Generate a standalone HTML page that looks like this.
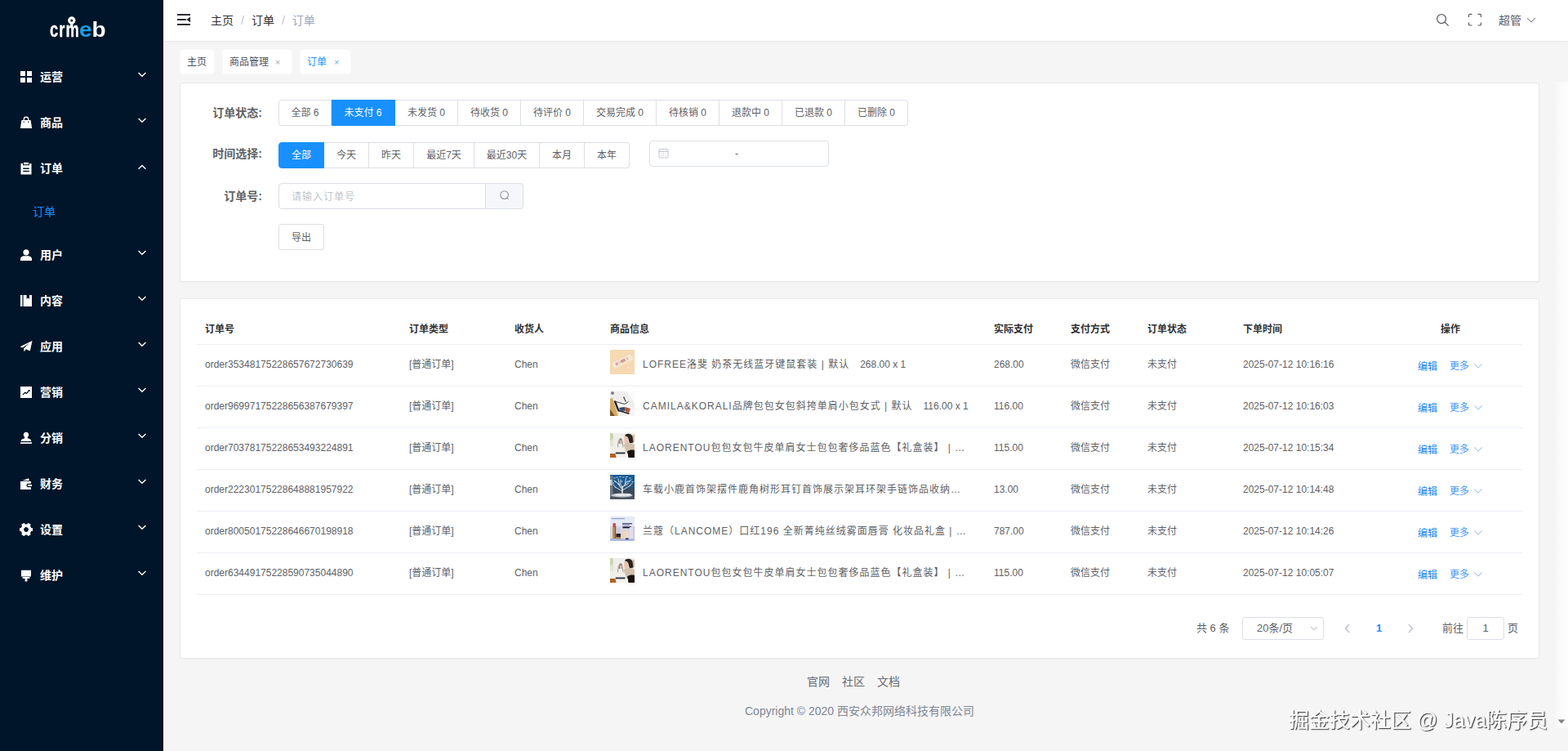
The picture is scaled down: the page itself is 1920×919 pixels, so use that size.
<!DOCTYPE html>
<html lang="zh-CN">
<head>
<meta charset="utf-8">
<title>订单</title>
<style>
*{box-sizing:border-box;margin:0;padding:0}
html,body{width:1920px;height:919px;overflow:hidden}
body{position:relative;background:#f5f5f5;font-family:"Liberation Sans","Noto Sans CJK SC",sans-serif;font-size:14px;color:#606266;-webkit-font-smoothing:antialiased}
.abs{position:absolute}
/* ---------- sidebar ---------- */
#side{position:absolute;left:0;top:0;width:200px;height:919px;background:#001529}
#logo{position:absolute;left:0;top:0;width:200px;height:66px;color:#fff;font-weight:700;font-size:25px;line-height:30px;white-space:nowrap}
#logo span{position:absolute;top:21px;display:block;transform-origin:0 0}
#logo i{font-style:normal;color:#1b9be0}
.mi{position:absolute;left:0;width:200px;height:56px;color:#fff;font-weight:700;font-size:14px;line-height:56px}
.mi span{position:absolute;left:49px;top:0;white-space:nowrap}
.mi svg.ic{position:absolute;left:24px;top:20px;width:16px;height:16px;fill:#fff}
.mi svg.ar{position:absolute;left:168px;top:19.400px;width:12px;height:12px;fill:none;stroke:#fff;stroke-width:1.4}
#sub{position:absolute;left:40px;top:234px;height:50px;line-height:50px;color:#1890ff;font-size:14px}
/* ---------- header ---------- */
#head{position:absolute;left:200px;top:0;width:1720px;height:50px;background:#fff;box-shadow:0 1px 3px rgba(0,21,41,.06)}
#bc{position:absolute;left:58px;top:0;height:50px;line-height:50px;font-size:14px;color:#303133;white-space:nowrap}
#bc b{font-weight:400;color:#c0c4cc;margin:0 9px}
#bc em{font-style:normal;color:#97a8be}
#user{position:absolute;left:1635px;top:0;line-height:50px;font-size:14px;color:#585c66}
/* ---------- tags ---------- */
.tag{position:absolute;top:61px;height:29px;line-height:30px;background:#fff;border-radius:3px;box-shadow:0 0 0 1px rgba(255,255,255,.5);font-size:12px;color:#495060;padding-left:8px;white-space:nowrap}
.tag u{text-decoration:none;position:absolute;right:14px;top:0.500px;font-size:10px;color:#a0a4ad}
/* ---------- cards ---------- */
.card{position:absolute;left:220px;width:1665px;background:#fff;border:1px solid #e8e9ec;border-radius:3px;box-shadow:0 1px 2px rgba(0,0,0,.03)}
.lbl{position:absolute;width:100px;text-align:right;font-weight:700;font-size:14px;color:#606266;line-height:32px;left:0}
.rg{position:absolute;left:120px;height:32px;display:flex;font-size:12px;color:#606266}
.rg a{display:block;height:32px;line-height:30px;border:1px solid #dcdfe6;border-left:0;text-align:center;white-space:nowrap;background:#fff}
.rg a:first-child{border-left:1px solid #dcdfe6;border-radius:4px 0 0 4px}
.rg a:last-child{border-radius:0 4px 4px 0}
.rg a.on{background:#1890ff;border-color:#1890ff;color:#fff}
/* ---------- table ---------- */
#tb{position:absolute;left:20px;top:1px;width:1623px;font-size:12px;color:#606266}
.th{position:absolute;top:29px;font-weight:700;color:#303133;line-height:14px;white-space:nowrap}
.hr{position:absolute;left:0;width:1623px;height:1px;background:#ebeef5}
.row{position:absolute;left:0;width:1623px;height:51px}
.row span{position:absolute;top:17px;line-height:14px;white-space:nowrap}
.row .pi{letter-spacing:1px;max-width:400px;overflow:hidden;text-overflow:ellipsis}
.row .pi em{font-style:normal;letter-spacing:0}
.row svg.tm{position:absolute;left:506px;top:6px;width:30px;height:30px;filter:blur(.3px)}
.row .ed{color:#1585f2;top:20px;margin-left:-1px}
.row .mo{color:#4596f7;top:19px}
.row svg.cv{position:absolute;left:1564px;top:21.600px;width:10px;height:8px;fill:none;stroke:#86aef5;stroke-width:.9}
/* ---------- pagination ---------- */
.pg{position:absolute;font-size:13px;color:#606266;white-space:nowrap;line-height:28px;top:389px}
.box{position:absolute;top:389px;height:28px;border:1px solid #dcdfe6;border-radius:3px;background:#fff;font-size:13px;line-height:26px;color:#606266;text-align:center}
/* ---------- footer ---------- */
.ft{position:absolute;white-space:nowrap;color:#808695;font-size:14px}
#wm{position:absolute;left:1578px;top:862.7px;will-change:transform;opacity:.99;font-size:25px;line-height:36px;color:#fafafa;white-space:nowrap;text-shadow:-.5px -.5px 0 #fff,1px 1px 1px #3a3a3a,1px 1px 2px rgba(0,0,0,.3)}
</style>
</head>
<body>
<!-- SIDEBAR -->
<div id="side">
  <div id="logo"><svg class="abs" style="left:80px;top:18px;width:16px;height:16px" viewBox="0 0 16 16"><circle cx="7.800" cy="7" r="3.100" fill="none" stroke="#fff" stroke-width="3.200"/><rect x="6.200" y="10" width="3.200" height="4" fill="#fff"/></svg><span style="left:61px;transform:scaleX(.73);-webkit-text-stroke:.35px #fff;letter-spacing:1.6px">crm</span><span style="left:97px;transform:scaleX(1.12)"><i>e</i>b</span></div>
  <div class="mi" style="top:66px"><svg class="ic" viewBox="0 0 16 16"><path d="M1 1h6v6H1zM9 1h6v6H9zM1 9h6v6H1zM9 9h6v6H9z"/></svg><span>运营</span><svg class="ar" viewBox="0 0 12 12"><path d="M1.6 4 L6 8.3 L10.4 4"/></svg></div>
  <div class="mi" style="top:122px"><svg class="ic" viewBox="0 0 16 16"><path d="M4.6 5V4.000a3.4 3.4 0 0 1 6.800 0v1h2.200l1.500 10H0.900L2.400 5zM5.900 5h4.200V4.000a2.100 2.100 0 0 0-4.200 0z" fill-rule="evenodd"/><circle cx="5.300" cy="7.300" r=".8" fill="#001529"/><circle cx="10.700" cy="7.300" r=".8" fill="#001529"/></svg><span>商品</span><svg class="ar" viewBox="0 0 12 12"><path d="M1.6 4 L6 8.3 L10.4 4"/></svg></div>
  <div class="mi" style="top:178px"><svg class="ic" viewBox="0 0 16 16"><path d="M5 0.800h6v2.400H5z"/><path d="M1.500 2h2.500v2.200h8V2h2.500v13.500h-13zM4.200 7.400h7.600v1.500H4.200zM4.200 10.800h7.600v1.500H4.200z" fill-rule="evenodd"/></svg><span>订单</span><svg class="ar" viewBox="0 0 12 12"><path d="M1.6 9.7 L6 5.4 L10.4 9.7"/></svg></div>
  <div class="mi" style="top:284px"><svg class="ic" viewBox="0 0 16 16"><circle cx="8" cy="4.8" r="3.6"/><path d="M1 15v-2.2c0-2 2.4-3.6 4.6-3.6h4.8c2.2 0 4.6 1.6 4.6 3.6V15z"/></svg><span>用户</span><svg class="ar" viewBox="0 0 12 12"><path d="M1.6 4 L6 8.3 L10.4 4"/></svg></div>
  <div class="mi" style="top:340px"><svg class="ic" viewBox="0 0 16 16"><path d="M1 1h2.4v14H1zM4.6 1h4v5l1.7-1.5L12 6V1h3v14H4.6z"/></svg><span>内容</span><svg class="ar" viewBox="0 0 12 12"><path d="M1.6 4 L6 8.3 L10.4 4"/></svg></div>
  <div class="mi" style="top:396px"><svg class="ic" viewBox="0 0 16 16"><path d="M0.5 8.2 15.5 1 12.8 13.6 7.6 11.2 5.6 14.6 5 10.4 12.2 3.8 3.6 9.6z"/></svg><span>应用</span><svg class="ar" viewBox="0 0 12 12"><path d="M1.6 4 L6 8.3 L10.4 4"/></svg></div>
  <div class="mi" style="top:452px"><svg class="ic" viewBox="0 0 16 16"><path d="M1 1h14v14H1zM3.4 10.8l0.8 0.8 2.6-2.4 1.8 1 3.2-3.4 0.6 0.7 0.4-2.6-2.6 0.3 0.7 0.7-2.5 2.6-1.8-1z" fill-rule="evenodd"/></svg><span>营销</span><svg class="ar" viewBox="0 0 12 12"><path d="M1.6 4 L6 8.3 L10.4 4"/></svg></div>
  <div class="mi" style="top:508px"><svg class="ic" viewBox="0 0 16 16"><path d="M8 0.8a3.3 3.3 0 0 1 2 5.9c-0.5 0.6-0.3 1.6 0.4 1.9l2.6 0.8c0.8 0.3 1.2 0.9 1.2 1.6v1H1.8v-1c0-0.7 0.4-1.3 1.2-1.6l2.6-0.8c0.7-0.3 0.9-1.3 0.4-1.9A3.3 3.3 0 0 1 8 0.8zM1 13.2h14V15H1z"/></svg><span>分销</span><svg class="ar" viewBox="0 0 12 12"><path d="M1.6 4 L6 8.3 L10.4 4"/></svg></div>
  <div class="mi" style="top:564px"><svg class="ic" viewBox="0 0 16 16"><path d="M3.2 4.2 11 1.2l1 3zM1 5h13v2.8h-3.4a2.2 2.2 0 0 0 0 4.4H14V15H1zM10.8 9h4.2v2h-4.2a1 1 0 0 1 0-2z"/></svg><span>财务</span><svg class="ar" viewBox="0 0 12 12"><path d="M1.6 4 L6 8.3 L10.4 4"/></svg></div>
  <div class="mi" style="top:620px"><svg class="ic" viewBox="0 0 16 16"><g transform="translate(8 8) rotate(30) scale(1.05)"><rect x="-2" y="-7.8" width="4" height="15.6" rx=".8"/><rect x="-2" y="-7.8" width="4" height="15.6" rx=".8" transform="rotate(60)"/><rect x="-2" y="-7.8" width="4" height="15.6" rx=".8" transform="rotate(120)"/><circle r="6.2"/><circle r="2.7" fill="#001529"/></g></svg><span>设置</span><svg class="ar" viewBox="0 0 12 12"><path d="M1.6 4 L6 8.3 L10.4 4"/></svg></div>
  <div class="mi" style="top:676px"><svg class="ic" viewBox="0 0 16 16"><path d="M2 1.800h12v7.600H2zM3.600 10.100h8.800v1.900H3.600zM6.600 12h2.800v3.600H6.600z"/></svg><span>维护</span><svg class="ar" viewBox="0 0 12 12"><path d="M1.6 4 L6 8.3 L10.4 4"/></svg></div>
  <div id="sub">订单</div>
</div>
<!-- HEADER -->
<div id="head">
  <div id="bc">主页<b>/</b>订单<b>/</b><em>订单</em></div>
  <svg class="abs" style="left:16px;top:16px;width:18px;height:16px" viewBox="0 0 18 16"><path d="M1 0.900h16v2.100H1zM1 6.900h10.800v2.100H1zM1 12.900h16v2.100H1zM17.100 4.500v7L12.300 8z" fill="#2b2d31"/></svg>
  <svg class="abs" style="left:1557px;top:15px;width:20px;height:20px" viewBox="0 0 20 20" fill="none" stroke="#585c66" stroke-width="1.25"><circle cx="8.1" cy="8.1" r="5.45"/><path d="M12 12 16.600 16.600"/></svg>
  <svg class="abs" style="left:1596.9px;top:16.3px;width:18px;height:16.4px" viewBox="0 0 18 18" preserveAspectRatio="none" fill="none" stroke="#585c66" stroke-width="1.25"><path d="M1.500 5.500V3a1.500 1.500 0 0 1 1.500-1.500h2.500M12.500 1.500H15a1.500 1.500 0 0 1 1.500 1.500v2.500M16.500 12.500V15a1.500 1.500 0 0 1-1.500 1.500h-2.500M5.500 16.500H3a1.500 1.500 0 0 1-1.500-1.500v-2.500"/></svg>
  <svg class="abs" style="left:1669px;top:20px;width:12px;height:10px" viewBox="0 0 12 10" fill="none" stroke="#585c66" stroke-width=".95"><path d="M1 2.1 6 7.1 11 2.1"/></svg>
  <div id="user">超管</div>
</div>
<!-- TAGS -->
<div class="tag" style="left:221px;width:41px">主页</div>
<div class="tag" style="left:273px;width:84px">商品管理<u>×</u></div>
<div class="tag" style="left:368px;width:61px;color:#1890ff">订单<u style="color:#5aaeff">×</u></div>
<!-- CARD1 -->
<div class="card" style="top:101px;height:244px">
<div class="lbl" style="top:19.500px">订单状态:</div>
<div class="rg" style="top:20px"><a style="width:65px">全部 6</a><a style="width:78px" class="on">未支付 6</a><a style="width:77px">未发货 0</a><a style="width:77px">待收货 0</a><a style="width:77px">待评价 0</a><a style="width:89px">交易完成 0</a><a style="width:77px">待核销 0</a><a style="width:77px">退款中 0</a><a style="width:77px">已退款 0</a><a style="width:77px">已删除 0</a></div>
<div class="lbl" style="top:70px">时间选择:</div>
<div class="rg" style="top:72px"><a style="width:56px" class="on">全部</a><a style="width:55px">今天</a><a style="width:55px">昨天</a><a style="width:74px">最近7天</a><a style="width:80px">最近30天</a><a style="width:55px">本月</a><a style="width:55px">本年</a></div>
<div class="abs" style="left:574px;top:70px;width:220px;height:32px;border:1px solid #dcdfe6;border-radius:4px;background:#fff;font-size:12px;line-height:30px;color:#606266"><svg class="abs" style="left:10px;top:8px;width:13px;height:13px" viewBox="0 0 13 13" fill="none" stroke="#c0c4cc" stroke-width="1"><rect x="1" y="1.500" width="11" height="10.500" rx="1"/><path d="M1 4.500h11M3.500 7h1M6 7h1M8.500 7h1M3.500 9.500h1M6 9.500h1M8.500 9.500h1"/></svg><span class="abs" style="left:104px;top:0">-</span></div>
<div class="lbl" style="top:122px">订单号:</div>
<div class="abs" style="left:120px;top:122px;width:254px;height:32px;border:1px solid #dcdfe6;border-radius:4px 0 0 4px;background:#fff;font-size:12px;line-height:32px;color:#c0c4cc;padding-left:15px;letter-spacing:1px">请输入订单号</div>
<div class="abs" style="left:373px;top:122px;width:47px;height:32px;border:1px solid #dcdfe6;border-radius:0 4px 4px 0;background:#f5f7fa"><svg class="abs" style="left:15.500px;top:7.200px;width:14px;height:14px" viewBox="0 0 14 14" fill="none" stroke="#909399" stroke-width="1.100"><circle cx="6.600" cy="6.600" r="4.800"/><path d="M10.200 10.400 11.600 11.800"/></svg></div>
<div class="abs" style="left:120px;top:172px;width:56px;height:32px;border:1px solid #dcdfe6;border-radius:3px;background:#fff;font-size:12px;line-height:32px;color:#606266;text-align:center">导出</div>
</div>
<!-- CARD2 -->
<div class="card" style="top:365px;height:441px">
<div id="tb">
<div class="th" style="left:10px">订单号</div><div class="th" style="left:260px">订单类型</div><div class="th" style="left:389px">收货人</div><div class="th" style="left:506px">商品信息</div><div class="th" style="left:976px">实际支付</div><div class="th" style="left:1070px">支付方式</div><div class="th" style="left:1164px">订单状态</div><div class="th" style="left:1281px">下单时间</div><div class="th" style="left:1523px">操作</div>
<div class="hr" style="top:54px"></div>
<div class="row" style="top:55px"><span style="left:10px">order35348175228657672730639</span><span style="left:260px">[普通订单]</span><span style="left:389px">Chen</span><svg class="tm" viewBox="0 0 30 30"><rect width="30" height="30" fill="#f5d9b2"/><g transform="rotate(-27 15 14)"><rect x="2" y="10.500" width="26" height="7.500" rx="1.500" fill="#f6e8d6"/><rect x="6" y="12.200" width="3" height="3.600" fill="#d9a59a"/><rect x="10" y="12.200" width="2" height="3.600" fill="#e8c6b8"/><rect x="13" y="12.200" width="6" height="3.600" fill="#cf9c93"/><rect x="20.500" y="12.200" width="2.500" height="3.600" fill="#e6c2b3"/></g><ellipse cx="21" cy="21.300" rx="3.600" ry="2.200" fill="#f3d0b0"/><ellipse cx="22.500" cy="21.600" rx="2" ry="1.500" fill="#f8e6d2"/></svg><span class="pi" style="left:546px">LOFREE洛斐 奶茶无线蓝牙键鼠套装 | 默认 &nbsp; <em>268.00 x 1</em></span><span style="left:976px">268.00</span><span style="left:1070px">微信支付</span><span style="left:1164px">未支付</span><span style="left:1281px">2025-07-12 10:16:16</span><span class="ed" style="left:1496px">编辑</span><span class="mo" style="left:1534px">更多</span><svg class="cv" viewBox="0 0 10 8"><path d="M0.500 1.300 5 6.200 9.500 1.300"/></svg></div>
<div class="hr" style="top:105px"></div>
<div class="row" style="top:106px"><span style="left:10px">order96997175228656387679397</span><span style="left:260px">[普通订单]</span><span style="left:389px">Chen</span><svg class="tm" viewBox="0 0 30 30"><rect width="30" height="30" fill="#f0eeec"/><path d="M20 0h10v14z" fill="#fbfbfb"/><path d="M24 22h6v8h-9z" fill="#f7f6f5"/><circle cx="3" cy="2" r="2" fill="#7d8084"/><path d="M0 9 3 8 10 30H0z" fill="#d6aa66"/><path d="M0 22 6 30H0z" fill="#7a5426"/><path d="M5 12 19 13 27 21 22 27 10 25z" fill="#f7f5f3"/><path d="M4.500 11.500 9.500 24.500 12 24.500 7 11.500z" fill="#1f1f24"/><path d="M10 24 23 28 24 26.500 11 22.500z" fill="#26262b"/><path d="M11 20 17.500 19 19 23.500 13 24z" fill="#2c4c72"/><path d="M18 19 25 21 23 26.500 18.500 24z" fill="#b4523f"/><path d="M7 12.500 18 15.500 22.500 12.500" stroke="#3a3a3e" stroke-width="1" fill="none"/><path d="M16.500 6.500c1.500 2 1 4 3 6" stroke="#4a4a50" stroke-width="1.300" fill="none"/></svg><span class="pi" style="left:546px">CAMILA&amp;KORALI品牌包包女包斜挎单肩小包女式 | 默认 &nbsp; <em>116.00 x 1</em></span><span style="left:976px">116.00</span><span style="left:1070px">微信支付</span><span style="left:1164px">未支付</span><span style="left:1281px">2025-07-12 10:16:03</span><span class="ed" style="left:1496px">编辑</span><span class="mo" style="left:1534px">更多</span><svg class="cv" viewBox="0 0 10 8"><path d="M0.500 1.300 5 6.200 9.500 1.300"/></svg></div>
<div class="hr" style="top:156px"></div>
<div class="row" style="top:157px"><span style="left:10px">order70378175228653493224891</span><span style="left:260px">[普通订单]</span><span style="left:389px">Chen</span><svg class="tm" viewBox="0 0 30 30"><rect width="30" height="30" fill="#efeee8"/><rect x="0" y="0" width="4" height="16" fill="#dfe6d2"/><path d="M0 0h3l1 5-2 4H0z" fill="#c6d6ae"/><rect x="27.500" y="2" width="2.500" height="9" fill="#dcb997"/><path d="M18 3c2-3.500 8-3 9.500 1l1 7.500-4.500 1-2-7z" fill="#2a2321"/><path d="M17 4.500c1.500-1.500 4-1 5 1.500l1 5.500-3.500 2.500-2-2z" fill="#e8c5b0"/><path d="M11.500 8c1-2 3-2 3.500 0l.5 5h-5z" fill="#8a7d78"/><path d="M12.300 9c.8-1 1.800-1 2.300 0v4h-2.600z" fill="#e2c3b2"/><path d="M16.500 14c3-2.500 10-3 13.500 0v10H20z" fill="#cfc1aa"/><path d="M21 22.500c3-2 6-2.300 9-1.500v9h-7.500z" fill="#17120f"/><path d="M9.500 17.500c0-7 2-11 3-11s3 5 3.500 11" stroke="#8e8e8c" stroke-width=".9" fill="none"/><path d="M8 17.500h9.500l1 6.500H6.800z" fill="#f1eee6"/><path d="M6.800 23.500h11.700v2.300H6.800z" fill="#27354f"/><path d="M0 25.500h22V30H0z" fill="#f5f3ef"/><path d="M0 25h6.500l1 5H0z" fill="#b5611f"/></svg><span class="pi" style="left:546px">LAORENTOU包包女包牛皮单肩女士包包奢侈品蓝色【礼盒装】 | 默认 &nbsp; <em>115.00 x 1</em></span><span style="left:976px">115.00</span><span style="left:1070px">微信支付</span><span style="left:1164px">未支付</span><span style="left:1281px">2025-07-12 10:15:34</span><span class="ed" style="left:1496px">编辑</span><span class="mo" style="left:1534px">更多</span><svg class="cv" viewBox="0 0 10 8"><path d="M0.500 1.300 5 6.200 9.500 1.300"/></svg></div>
<div class="hr" style="top:207px"></div>
<div class="row" style="top:208px"><span style="left:10px">order22230175228648881957922</span><span style="left:260px">[普通订单]</span><span style="left:389px">Chen</span><svg class="tm" viewBox="0 0 30 30"><rect width="30" height="30" fill="#3b4a5b"/><rect width="30" height="13" fill="#1a5b95"/><rect y="11" width="30" height="6" fill="#2a5379"/><path d="M0 1h3.500v28H0z" fill="#6d7886"/><path d="M0 6h2.500v7H0z" fill="#c9ced4"/><g stroke="#e3eaef" fill="none" stroke-linecap="round"><path d="M15 25V14" stroke-width="1.500"/><path d="M15 18 9 10M15 16 21 8M15 20 6 15M15 19 25 13M11.500 13 10 5M18.500 11 19.500 4M9 10 5 7M21 9 26 6M13 15.500 13 6M17 14 23 10M7 15.500 4 12M24 13.500 27.500 10" stroke-width=".9"/><path d="M5 4h1M8 3h1M12 2.500h1M16 3h1M20 2.500h1M24 4h1M6 8.500h1M14 8h1M23 8h1M27 8.500h1M10 11.500h1M19 12.500h1M3.500 10h1" stroke-width="1.200" stroke="#cfe2f0"/></g><rect y="26.500" width="30" height="3.500" fill="#4b5560"/><ellipse cx="14.500" cy="25" rx="13" ry="2.500" fill="#bfc8ce"/><ellipse cx="14" cy="24.600" rx="9" ry="1.300" fill="#e6ebee"/><rect x="20" y="23" width="5" height="2.500" rx="1" fill="#f4f6f7"/></svg><span class="pi" style="left:546px">车载小鹿首饰架摆件鹿角树形耳钉首饰展示架耳环架手链饰品收纳架 | 默认 &nbsp; <em>13.00 x 1</em></span><span style="left:976px">13.00</span><span style="left:1070px">微信支付</span><span style="left:1164px">未支付</span><span style="left:1281px">2025-07-12 10:14:48</span><span class="ed" style="left:1496px">编辑</span><span class="mo" style="left:1534px">更多</span><svg class="cv" viewBox="0 0 10 8"><path d="M0.500 1.300 5 6.200 9.500 1.300"/></svg></div>
<div class="hr" style="top:258px"></div>
<div class="row" style="top:259px"><span style="left:10px">order80050175228646670198918</span><span style="left:260px">[普通订单]</span><span style="left:389px">Chen</span><svg class="tm" viewBox="0 0 30 30"><rect width="30" height="30" fill="#d3d6ee"/><rect width="30" height="12" fill="#e4eaf6"/><rect y="27" width="30" height="3" fill="#aeb8de"/><rect x="2" y="2" width="16" height="1.200" fill="#8fa3cc"/><rect x="1" y="12" width="2.500" height="14" fill="#ddd8ea"/><rect x="3.200" y="12" width="4" height="15" fill="#b98b48"/><rect x="6" y="12" width="1.200" height="15" fill="#7c5a2a"/><path d="M3.500 13v-4c0-1.500 3.400-1.500 3.400 0v4z" fill="#c8454f"/><rect x="7.500" y="21" width="5.500" height="4.500" fill="#2a201e"/><rect x="7.500" y="25.500" width="5.500" height="1.800" fill="#b08643"/><rect x="9" y="14" width="3" height="7" fill="#cfc3e6"/><rect x="15" y="8" width="12" height="1.500" fill="#5a5c7e"/><rect x="15" y="10" width="9" height="1" fill="#8b8fae"/><rect x="15.500" y="12.300" width="10.500" height="2" fill="#1b1830"/><rect x="13.800" y="15.500" width="4.200" height="11" fill="#e8d6c0"/><rect x="18.500" y="18" width="4.500" height="9" rx="1" fill="#eddcc6"/><rect x="19" y="26.500" width="3.500" height="1.800" fill="#2b2f4a"/><rect x="24" y="13" width="5" height="14" fill="#e1ddf0"/><rect x="28.500" y="12" width="1.500" height="15" fill="#c4c0e0"/></svg><span class="pi" style="left:546px">兰蔻（LANCOME）口红196 全新菁纯丝绒雾面唇膏 化妆品礼盒 | 默认 &nbsp; <em>787.00 x 1</em></span><span style="left:976px">787.00</span><span style="left:1070px">微信支付</span><span style="left:1164px">未支付</span><span style="left:1281px">2025-07-12 10:14:26</span><span class="ed" style="left:1496px">编辑</span><span class="mo" style="left:1534px">更多</span><svg class="cv" viewBox="0 0 10 8"><path d="M0.500 1.300 5 6.200 9.500 1.300"/></svg></div>
<div class="hr" style="top:309px"></div>
<div class="row" style="top:310px"><span style="left:10px">order63449175228590735044890</span><span style="left:260px">[普通订单]</span><span style="left:389px">Chen</span><svg class="tm" viewBox="0 0 30 30"><rect width="30" height="30" fill="#efeee8"/><rect x="0" y="0" width="4" height="16" fill="#dfe6d2"/><path d="M0 0h3l1 5-2 4H0z" fill="#c6d6ae"/><rect x="27.500" y="2" width="2.500" height="9" fill="#dcb997"/><path d="M18 3c2-3.500 8-3 9.500 1l1 7.500-4.500 1-2-7z" fill="#2a2321"/><path d="M17 4.500c1.500-1.500 4-1 5 1.500l1 5.500-3.500 2.500-2-2z" fill="#e8c5b0"/><path d="M11.500 8c1-2 3-2 3.500 0l.5 5h-5z" fill="#8a7d78"/><path d="M12.300 9c.8-1 1.800-1 2.300 0v4h-2.600z" fill="#e2c3b2"/><path d="M16.500 14c3-2.500 10-3 13.500 0v10H20z" fill="#cfc1aa"/><path d="M21 22.500c3-2 6-2.300 9-1.500v9h-7.500z" fill="#17120f"/><path d="M9.500 17.500c0-7 2-11 3-11s3 5 3.500 11" stroke="#8e8e8c" stroke-width=".9" fill="none"/><path d="M8 17.500h9.500l1 6.500H6.800z" fill="#f1eee6"/><path d="M6.800 23.500h11.700v2.300H6.800z" fill="#27354f"/><path d="M0 25.500h22V30H0z" fill="#f5f3ef"/><path d="M0 25h6.500l1 5H0z" fill="#b5611f"/></svg><span class="pi" style="left:546px">LAORENTOU包包女包牛皮单肩女士包包奢侈品蓝色【礼盒装】 | 默认 &nbsp; <em>115.00 x 1</em></span><span style="left:976px">115.00</span><span style="left:1070px">微信支付</span><span style="left:1164px">未支付</span><span style="left:1281px">2025-07-12 10:05:07</span><span class="ed" style="left:1496px">编辑</span><span class="mo" style="left:1534px">更多</span><svg class="cv" viewBox="0 0 10 8"><path d="M0.500 1.300 5 6.200 9.500 1.300"/></svg></div>
<div class="hr" style="top:360px"></div>
</div>
<div class="pg" style="left:1244px">共 6 条</div>
<div class="box" style="left:1300px;width:100px;text-align:left;padding-left:17px">20条/页<svg class="abs" style="left:82px;top:9px;width:10px;height:8px" viewBox="0 0 10 8" fill="none" stroke="#c0c4cc" stroke-width="1.100"><path d="M1 1.800 5 5.800 9 1.800"/></svg></div>
<svg class="abs" style="left:1424px;top:397px;width:10px;height:12px" viewBox="0 0 10 12" fill="none" stroke="#c0c4cc" stroke-width="1.600"><path d="M7 1 2.500 6 7 11"/></svg>
<div class="pg" style="left:1464px;color:#1890ff;font-weight:700">1</div>
<svg class="abs" style="left:1501px;top:397px;width:10px;height:12px" viewBox="0 0 10 12" fill="none" stroke="#c0c4cc" stroke-width="1.600"><path d="M3 1 7.500 6 3 11"/></svg>
<div class="pg" style="left:1545px">前往</div>
<div class="box" style="left:1575px;width:46px">1</div>
<div class="pg" style="left:1625px">页</div>
</div>
<!-- FOOTER -->
<div class="ft" style="left:988px;top:824px;line-height:20px;color:#666a73">官网</div>
<div class="ft" style="left:1031px;top:824px;line-height:20px;color:#666a73">社区</div>
<div class="ft" style="left:1074px;top:824px;line-height:20px;color:#666a73">文档</div>
<div class="ft" style="left:912px;top:860px;line-height:20px">Copyright © 2020 西安众邦网络科技有限公司</div>
<div class="abs" style="left:1904px;top:100px;width:16px;height:791px;background:linear-gradient(90deg,#f6f6f6,#fbfbfb 40%,#fdfdfd)"></div>
<svg class="abs" style="left:1907px;top:880px;width:10px;height:6px" viewBox="0 0 10 6"><path d="M0.500 0.500h9L5 5.500z" fill="#858585"/></svg>
<div id="wm">掘金技术社区 @ Java陈序员</div>
</body>
</html>
